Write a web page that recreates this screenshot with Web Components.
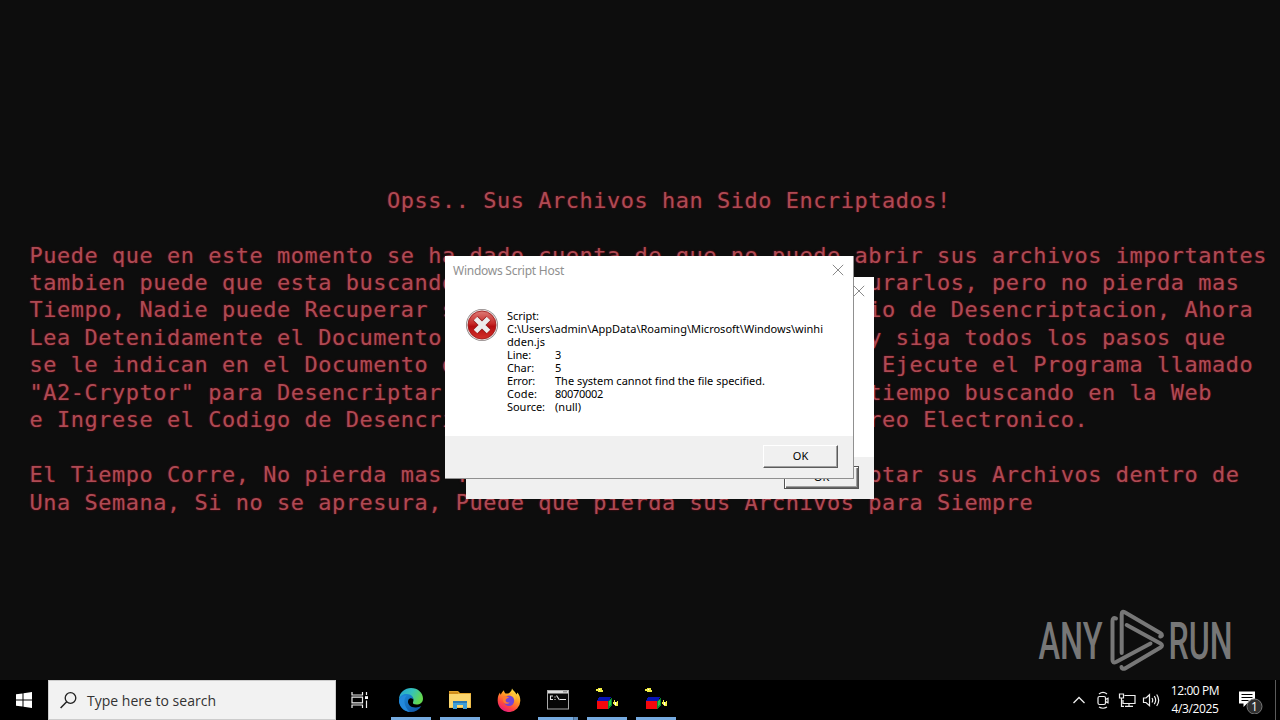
<!DOCTYPE html>
<html lang="es">
<head>
<meta charset="utf-8">
<title>Desktop</title>
<style>
html, body {
  margin: 0;
  width: 1280px;
  height: 720px;
  overflow: hidden;
  background: #0d0d0d;
}
</style>
</head>
<body>
<desk-top>
  <ransom-note slot="wallpaper"></ransom-note>
  <anyrun-mark slot="mark"></anyrun-mark>
  <script-dialog slot="windows" class="back" focused></script-dialog>
  <script-dialog slot="windows" class="front">
    <span slot="title"><fit-text width="111">Windows Script Host</fit-text></span>
    <dialog-row><fit-text width="32">Script:</fit-text></dialog-row>
    <dialog-row><fit-text width="316">C:\Users\admin\AppData\Roaming\Microsoft\Windows\winhi</fit-text></dialog-row>
    <dialog-row><fit-text width="38">dden.js</fit-text></dialog-row>
    <dialog-row><fit-text width="24">Line:</fit-text><fit-text slot="value" width="6">3</fit-text></dialog-row>
    <dialog-row><fit-text width="27">Char:</fit-text><fit-text slot="value" width="6">5</fit-text></dialog-row>
    <dialog-row><fit-text width="28">Error:</fit-text><fit-text slot="value" width="210">The system cannot find the file specified.</fit-text></dialog-row>
    <dialog-row><fit-text width="30">Code:</fit-text><fit-text slot="value" width="48">80070002</fit-text></dialog-row>
    <dialog-row><fit-text width="38">Source:</fit-text><fit-text slot="value" width="26">(null)</fit-text></dialog-row>
  </script-dialog>
  <task-bar slot="taskbar"></task-bar>
</desk-top>

<script>
// small helper, every element clones its own template
function makeTemplate(html){
    var t = document.createElement("template");
    t.innerHTML = html;
    return t;
}

//DESKTOP
var template_desktop = makeTemplate(`
<style>
:host {
  display:flex;
  flex-direction:column;
  position:relative;
  width:1280px;
  height:720px;
  background:#0d0d0d;
}
.screen {
  height:680px;
  flex:none;
}
::slotted([slot=mark]) {
  position:absolute;
  left:1036px;
  top:606px;
}
::slotted(.back) {
  position:absolute;
  left:466px;
  top:277px;
}
::slotted(.front) {
  position:absolute;
  left:445px;
  top:256px;
}
</style>
<div class="screen"><slot name="wallpaper"></slot></div>
<slot name="mark"></slot>
<slot name="windows"></slot>
<slot name="taskbar"></slot>
`);

class DeskTop extends HTMLElement {
    constructor(){
        super();
        this.attachShadow({mode:"open"})
    }
    connectedCallback(){
        this.shadowRoot.appendChild(template_desktop.content.cloneNode(true));
    }
}

//FIT TEXT - spreads the letters so the text takes the given width
var template_fit = makeTemplate(`
<style>
:host {
  display:block;
  white-space:nowrap;
}
</style>
<span><slot></slot></span>
`);

class FitText extends HTMLElement {
    constructor(){
        super();
        this.attachShadow({mode:"open"})
    }
    connectedCallback(){
        this.shadowRoot.appendChild(template_fit.content.cloneNode(true));
    }
    fit(){
        var span = this.shadowRoot.querySelector("span");
        var want = Number(this.getAttribute("width"));
        var count = this.textContent.length;
        span.style.letterSpacing = "0px";
        var gap = (want - span.getBoundingClientRect().width) / count;
        span.style.letterSpacing = gap.toFixed(3) + "px";
    }
}

//WALLPAPER TEXT
// [column, text] pieces of each row, the monospace grid is 13.75 x 27.5
var noteRows = [
    [[26, "Opss.. Sus Archivos han Sido Encriptados!"]],
    [],
    [[0, "Puede que en este momento se ha dado cuenta de que no puede abrir sus archivos importantes"]],
    [[0, "tambien puede que esta buscando"], [61, "urarlos, pero no pierda mas"]],
    [[0, "Tiempo, Nadie puede Recuperar s"], [61, "io de Desencriptacion, Ahora"]],
    [[0, "Lea Detenidamente el Documento"], [61, "y siga todos los pasos que"]],
    [[0, "se le indican en el Documento d"], [62, "Ejecute el Programa llamado"]],
    [[0, "\"A2-Cryptor\" para Desencriptar"], [61, "tiempo buscando en la Web"]],
    [[0, "e Ingrese el Codigo de Desencri"], [61, "reo Electronico."]],
    [],
    [[0, "El Tiempo Corre, No pierda mas T"], [61, "ptar sus Archivos dentro de"]],
    [[0, "Una Semana, Si no se apresura, Puede que pierda sus Archivos para Siempre"]]
];

var template_note = makeTemplate(`
<style>
:host {
  display:block;
  box-sizing:border-box;
  height:680px;
  padding:186.7px 0 0 29.500px;
  font:22px/27.45px "DejaVu Sans Mono", monospace;
  letter-spacing:0.505px;
  color:#ae4a54;
  text-shadow:0 0 2px #7c0c18;
}
.row {
  height:27.45px;
  white-space:pre;
}
</style>
<div class="rows"></div>
`);

class RansomNote extends HTMLElement {
    constructor(){
        super();
        this.attachShadow({mode:"open"})
    }
    connectedCallback(){
        this.shadowRoot.appendChild(template_note.content.cloneNode(true));
        var rows = this.shadowRoot.querySelector(".rows");
        noteRows.forEach(function(parts){
            var row = document.createElement("div");
            var line = "";
            parts.forEach(function(p){ line = line.padEnd(p[0], " ") + p[1]; });
            row.className = "row";
            row.textContent = line;
            rows.appendChild(row);
        });
    }
}

//WATERMARK
var template_mark = makeTemplate(`
<style>
:host { display:block; width:200px; height:70px; }
svg { display:block; overflow:visible; }
text { font:500 51px Roboto, sans-serif; fill:#777; }
path { fill:none; stroke:#777; stroke-width:4; stroke-linecap:round; stroke-linejoin:round; }
</style>
<svg width="200" height="70" viewBox="1036 606 200 70">
  <text x="1038.500" y="659" textLength="64" lengthAdjust="spacingAndGlyphs">ANY</text>
  <path d="M1116 618.500q-3.500-1.500-3.500 2.500v39q0 3.500 3.500 2L1150.500 643.500"/>
  <path d="M1121.700 653V614q0-3.500 3.500-1.500l35 20.500q3.500 2.500 0 3.500"/>
  <path d="M1126.700 625L1160.500 643.500q3 2 0 4L1125 668.500q-3 1-3.500-1.500"/>
  <text x="1168.500" y="659" textLength="64" lengthAdjust="spacingAndGlyphs">RUN</text>
</svg>
`);

class AnyrunMark extends HTMLElement {
    constructor(){
        super();
        this.attachShadow({mode:"open"})
    }
    connectedCallback(){
        this.shadowRoot.appendChild(template_mark.content.cloneNode(true));
    }
}

//MESSAGE BOX
var template_dialog = makeTemplate(`
<style>
:host {
  display:flex;
  flex-direction:column;
  box-sizing:border-box;
  width:409px;
  height:223px;
  background:#fff;
  border-right:1px solid #909090;
  border-bottom:1px solid #909090;
  font:11px/13px "Noto Sans", sans-serif;
  color:#000;
}
:host([focused]) { width:408px; height:222px; border-right:0; border-bottom:0; }
header {
  display:flex;
  justify-content:space-between;
  align-items:center;
  height:28px;
  padding:0 9px 0 8px;
  font-size:12px;
  color:#909090;
}
.body {
  display:flex;
  flex:1;
  padding:25px 0 0 20px;
  gap:8px;
}
:host([focused]) .icon { visibility:hidden; }
footer {
  display:flex;
  justify-content:flex-end;
  align-items:flex-start;
  height:42px;
  box-sizing:border-box;
  padding:9px 15px 0 0;
  background:#f0f0f0;
}
button {
  box-sizing:border-box;
  width:75px;
  height:23px;
  margin:0;
  padding:0 0 2px;
  font:11px/13px "Noto Sans", sans-serif;
  color:#000;
  background:#f0f0f0;
  border:1px solid;
  border-color:#fff #5c5c5c #5c5c5c #fff;
  box-shadow:inset -1px -1px #a0a0a0;
}
:host([focused]) button { border-color:#555; box-shadow:inset 1px 1px #fff, inset -1px -1px #666, inset -2px -2px #a0a0a0; }
</style>
<header>
  <slot name="title"><span></span></slot>
  <svg width="12" height="12" viewBox="0 0 12 12"><path d="M.8.8l10.400 10.400M11.200.8L.8 11.200" stroke="#8a8a8a" stroke-width="1" fill="none"/></svg>
</header>
<div class="body">
  <svg class="icon" width="34" height="34" viewBox="0 0 34 34">
    <defs>
      <linearGradient id="red" x1="0" y1="0" x2="0" y2="1">
        <stop offset="0" stop-color="#dd7b76"/><stop offset=".45" stop-color="#c62a28"/>
        <stop offset=".55" stop-color="#b40d10"/><stop offset="1" stop-color="#d3302a"/>
      </linearGradient>
    </defs>
    <circle cx="17" cy="16" r="16" fill="#8d8585"/>
    <circle cx="17" cy="16" r="15.200" fill="#e6dddd"/>
    <circle cx="17" cy="16" r="14" fill="url(#red)" stroke="#9c1717" stroke-width=".8"/>
    <path d="M10.500 9.500l13 13M23.500 9.500l-13 13" stroke="#8f1616" stroke-width="6.600"/>
    <path d="M10.500 9.500l13 13M23.500 9.500l-13 13" stroke="#ececec" stroke-width="5"/>
  </svg>
  <div class="lines"><slot></slot></div>
</div>
<footer><button>OK</button></footer>
`);

class ScriptDialog extends HTMLElement {
    constructor(){
        super();
        this.attachShadow({mode:"open"})
    }
    connectedCallback(){
        this.shadowRoot.appendChild(template_dialog.content.cloneNode(true));
    }
}

//ONE LINE OF THE MESSAGE
var template_row = makeTemplate(`
<style>
:host {
  display:grid;
  grid-template-columns:48px auto;
  height:13px;
}
</style>
<slot></slot><slot name="value"></slot>
`);

class DialogRow extends HTMLElement {
    constructor(){
        super();
        this.attachShadow({mode:"open"})
    }
    connectedCallback(){
        this.shadowRoot.appendChild(template_row.content.cloneNode(true));
    }
}

//TASKBAR BUTTON
var appIcons = {
    edge: `<svg width="26" height="26" viewBox="0 0 26 26">
      <defs>
        <linearGradient id="a" x1="0" y1="0" x2="1" y2=".4"><stop offset="0" stop-color="#219fd4"/><stop offset=".55" stop-color="#35c2ba"/><stop offset="1" stop-color="#63d850"/></linearGradient>
        <linearGradient id="b" x1="0" y1="0" x2="1" y2="1"><stop offset="0" stop-color="#1c8fdd"/><stop offset="1" stop-color="#0f4fa0"/></linearGradient>
      </defs>
      <path d="M1 12C1.500 5 7 1 13 1c7 0 12 5 12 10.500 0 4-3 6-6.500 6-2.500 0-4-1-3.500-2.300 1-2 .8-5.200-3-5.700C7 8 2 10 1 12z" fill="url(#a)"/>
      <path d="M1 13c0-4 4-6.500 8-6 4 .3 6.500 2.500 6.300 5.500-1.300-1.700-4-1.500-5 .5-1.600 4 2.700 8 7.700 7.500 2-.2 3.700-.8 5.300-1.500C21 23 17 25 13 25 6 25 1 19.500 1 13z" fill="url(#b)"/>
      <path d="M9 8.500C5 11 5.500 20 12 24.900 5.500 24.500 1.500 19.500 1 14c1-4 4-6 8-5.500z" fill="#2389dc"/>
    </svg>`,
    folder: `<svg width="22" height="20" viewBox="0 0 22 20">
      <path d="M0 1h9l2 2h11v15H0z" fill="#e3a52c"/><path d="M1 4h20.500v13.500H0V4z" fill="#fbd66e"/>
      <path d="M0 2h9v2H0z" fill="#d08d1c"/>
      <path d="M4 19v-8h14v8h-4v-4H8v4z" fill="#3d9ed7"/><path d="M4 11h14v2H4z" fill="#2a79b4"/>
    </svg>`,
    firefox: `<svg width="24" height="24" viewBox="0 0 24 24">
      <defs><linearGradient id="f" x1=".8" y1="0" x2=".25" y2="1"><stop offset="0" stop-color="#fff047"/><stop offset=".4" stop-color="#ff9a25"/><stop offset=".72" stop-color="#ff4640"/><stop offset="1" stop-color="#e31587"/></linearGradient></defs>
      <path d="M15 .5c1 2 3.500 3.500 4.500 6l1-2c2 2.500 2.800 5 2.800 8A11.300 11.300 0 0 1 .7 13C.5 9.500 1.500 6.500 3 4.500c0 1 .3 1.700.8 2.200C4.500 4.500 6 3 7 2.200c0 1.300.5 2.300 1.500 3.300h2.700C13 4.500 14.800 3 15 .5z" fill="url(#f)"/>
      <circle cx="12" cy="12.700" r="5.200" fill="#7144d8"/>
      <path d="M6 8.700c2.500-.8 5-.2 6 1.100-1.500.2-3 1-3.300 2.200-.3 1.800 1.500 3 4 2.200-1 2.300-6 2.500-6.700-1.700z" fill="#ff7b2f"/>
      <path d="M13.500 7.200c3 .7 4.500 3 4.200 5.500 1.500-2.500 1-5-1-7z" fill="#ffc33b"/>
    </svg>`,
    cmd: `<svg width="23" height="20" viewBox="0 0 23 20">
      <rect x=".5" y=".5" width="21" height="18.500" fill="#060606" stroke="#a9a9a9"/>
      <path d="M1 1h20v2.500H1z" fill="#ddd"/><path d="M16 1.800h4" stroke="#777"/>
      <path d="M6 6H3.500v3.500H6M8 6.500v1M8 9v1M9.500 5.500l3 4.500M13 9.500h6" stroke="#e6e6e6" fill="none" stroke-width="1.100"/>
    </svg>`,
    blocks: `<svg width="24" height="24" viewBox="0 0 24 24" shape-rendering="crispEdges">
      <path d="M4 9h12l-2 4H2z" fill="#0713b5"/><path d="M2 13h11v8H2z" fill="#f3080d"/>
      <path d="M13 13l4-4v8l-4 4z" fill="#08852f"/><path d="M14 14l2-3v5l-2 3z" fill="#20c34e"/>
      <path d="M1 1h3v2H1zM3 0h4v4H3zM6 2h2v2H6z" fill="#f0ed42"/><path d="M4 1h1v1H4z" fill="#fff"/>
      <path d="M19 12h1v2h2v-1h1v5h-3v-1h-1v-1h-1v-2h1z" fill="#f0ed42"/><path d="M20 14h1v3h-1z" fill="#fff"/>
    </svg>`
};

var template_app = makeTemplate(`
<style>
:host {
  display:flex;
  flex-direction:column;
  width:40px;
  height:40px;
}
.icon {
  flex:1;
  display:flex;
  align-items:center;
  justify-content:center;
  padding-top:3px;
}
.line { height:3px; background:transparent; }
:host([running]) .line { background:#76abe0; }
:host([stacked]) .line { background:linear-gradient(90deg, #76abe0 35px, #4a6c90 35px, #4a6c90 36px, #5f8bb8 36px); }
</style>
<div class="icon"></div>
<div class="line"></div>
`);

class AppButton extends HTMLElement {
    constructor(){
        super();
        this.attachShadow({mode:"open"})
    }
    connectedCallback(){
        this.shadowRoot.appendChild(template_app.content.cloneNode(true));
        this.shadowRoot.querySelector(".icon").innerHTML = appIcons[this.getAttribute("icon")];
    }
}

//TASKBAR
var template_taskbar = makeTemplate(`
<style>
:host {
  display:flex;
  width:1280px;
  height:40px;
  background:#000;
  color:#fff;
  font-family:"Open Sans", "Noto Sans", sans-serif;
}
svg { display:block; flex:none; }
.start, .view {
  display:flex;
  align-items:center;
  justify-content:center;
  width:48px;
}
.search {
  display:flex;
  align-items:center;
  box-sizing:border-box;
  width:288px;
  padding-left:11px;
  gap:10px;
  background:#f2f2f2;
  border:1px solid #ccc;
  color:#333;
  font-size:14px;
}
.apps { display:flex; gap:9px; padding-left:7px; }
.tray {
  display:flex;
  align-items:center;
  margin-left:auto;
}
.tray > svg { margin-right:6px; }
.clock {
  width:56px;
  margin-left:1px;
  margin-right:1px;
  text-align:center;
  white-space:nowrap;
  font-size:12px;
  line-height:18px;
  letter-spacing:-0.4px;
  padding-bottom:1px;
}
.note {
  display:flex;
  width:28px;
  margin-left:15px;
}
.peek { width:1px; height:40px; margin:0 4px 0 8px; background:#5a5a5a; }
</style>
<div class="start">
  <svg width="16" height="16" viewBox="0 0 16 16"><path d="M0 2.300l6.500-.9v6.100H0zM7.500 1.200L16 0v7.500H7.500zM0 8.500h6.500v6.100L0 13.700zM7.500 8.500H16V16l-8.500-1.200z" fill="#fff"/></svg>
</div>
<div class="search">
  <svg width="17" height="17" viewBox="0 0 17 17"><circle cx="10.500" cy="6" r="5.300" fill="none" stroke="#222" stroke-width="1.300"/><path d="M6.700 9.800L.6 16" stroke="#222" stroke-width="1.500"/></svg>
  <fit-text width="129">Type here to search</fit-text>
</div>
<div class="view">
  <svg width="18" height="16" viewBox="0 0 18 16" fill="none" stroke="#eee" stroke-width="1.200"><path d="M1 0v3h10.500V0M1 16v-3h10.500v3M1 5.200h10.500v5.600H1zM15.500 0v3M15.500 8.500V16"/><path d="M14 4.200h3v2.800h-3z" fill="#fff" stroke="none"/></svg>
</div>
<div class="apps">
  <app-button icon="edge" running></app-button>
  <app-button icon="folder" running></app-button>
  <app-button icon="firefox"></app-button>
  <app-button icon="cmd" running stacked></app-button>
  <app-button icon="blocks" running></app-button>
  <app-button icon="blocks" running></app-button>
</div>
<div class="tray">
  <svg width="18" height="18" viewBox="0 0 18 18" fill="none" stroke="#eee" stroke-width="1.300"><path d="M3.500 12L9 6.500l5.500 5.500"/></svg>
  <svg width="18" height="18" viewBox="0 0 18 18" fill="none" stroke="#eee" stroke-width="1.200"><rect x="4" y="5.500" width="7.500" height="8" rx="1.500"/><path d="M11.500 8.500l2.500-1.200v4.500l-2.500-1.200M5 3q4-3.200 8 0M5 16q4 2.500 8 0"/></svg>
  <svg width="18" height="18" viewBox="0 0 18 18" fill="none" stroke="#eee" stroke-width="1.200"><path d="M6.500 4.500H17v8H5V9M11 12.500V15M7 15.400h8M1.500 3h4v4h-4zM3.500 7v8.400H6"/></svg>
  <svg width="18" height="18" viewBox="0 0 18 18" fill="none" stroke="#eee" stroke-width="1.200"><path d="M1.500 7H4l3.500-3.300v11L4 11.500H1.500zM10 7q1.400 2.200 0 4.500M12.300 5.200q2.700 4 0 8M14.700 3.500q4 5.800 0 11.500"/></svg>
  <div class="clock"><div>12:00 PM</div><div>4/3/2025</div></div>
  <div class="note">
    <svg width="28" height="28" viewBox="0 0 28 28">
      <path d="M0 5.500h16v12H8l-3.500 3.500v-3.500H0z" fill="#fff"/>
      <path d="M2.500 8.500h11M2.500 11.500h11M2.500 14.500h7" stroke="#000" stroke-width="1"/>
      <circle cx="15.500" cy="20.500" r="7.500" fill="#303030" stroke="#777" stroke-width="1"/>
      <text x="15.500" y="25" text-anchor="middle" font-size="12" fill="#fff">1</text>
    </svg>
  </div>
  <div class="peek"></div>
</div>
`);

class TaskBar extends HTMLElement {
    constructor(){
        super();
        this.attachShadow({mode:"open"})
    }
    connectedCallback(){
        this.shadowRoot.appendChild(template_taskbar.content.cloneNode(true));
    }
}

//define the tags for the custom elements
customElements.define("desk-top", DeskTop)
customElements.define("ransom-note", RansomNote)
customElements.define("anyrun-mark", AnyrunMark)
customElements.define("script-dialog", ScriptDialog)
customElements.define("dialog-row", DialogRow)
customElements.define("app-button", AppButton)
customElements.define("task-bar", TaskBar)
customElements.define("fit-text", FitText)

// letters are measured once everything is in place
document.querySelectorAll("fit-text").forEach(function(el){ el.fit(); });
document.querySelector("task-bar").shadowRoot.querySelectorAll("fit-text").forEach(function(el){ el.fit(); });
</script>
</body>
</html>
